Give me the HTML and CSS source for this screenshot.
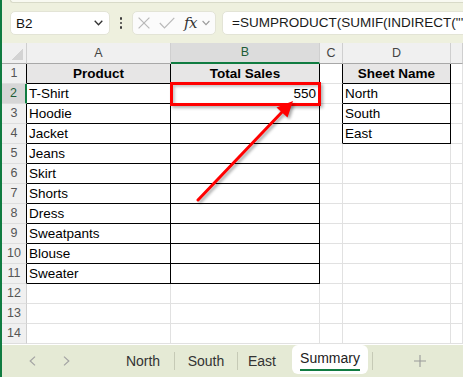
FILE: index.html
```html
<!DOCTYPE html>
<html>
<head>
<meta charset="utf-8">
<link rel="stylesheet" href="styles.css">
</head>
<body>
<div class="app">
  <div class="topbar">
    <div class="ribbon-edge"></div>
    <div class="fbar">
      <div class="namebox"><span>B2</span><svg width="9" height="6" viewBox="0 0 9 6"><polyline points="0.7,0.7 4.5,4.8 8.3,0.7" fill="none" stroke="#333" stroke-width="1.3"/></svg></div>
      <div class="dots"><i></i><i></i><i></i></div>
      <div class="fbtns">
        <svg class="ic-x" width="12" height="12" viewBox="0 0 12 12"><path d="M0.6 0.6 L11.4 11.4 M11.4 0.6 L0.6 11.4" stroke="#b9b9b9" stroke-width="1.2" fill="none"/></svg>
        <svg class="ic-ok" width="16" height="12" viewBox="0 0 16 12"><polyline points="0.8,6 5.5,11 15.3,0.8" stroke="#b9b9b9" stroke-width="1.2" fill="none"/></svg>
        <span class="fx">fx</span>
        <svg class="ic-dd" width="8" height="6" viewBox="0 0 8 6"><polyline points="0.6,1 4,4.6 7.4,1" fill="none" stroke="#9a9a9a" stroke-width="1.1"/></svg>
      </div>
      <div class="formula">=SUMPRODUCT(SUMIF(INDIRECT("'"&amp;D2:D4&amp;"'!A2:A11"),A2,INDIRECT("'"&amp;D2:D4&amp;"'!B2:B11")))</div>
    </div>
  </div>

  <div class="sheet">
    <div class="corner"></div><div class="ch">A</div><div class="ch sel">B</div><div class="ch">C</div><div class="ch">D</div><div class="ch"></div>

    <div class="rh tb">1</div><div class="t th">Product</div><div class="t th">Total Sales</div><div class="lb"></div><div class="t th">Sheet Name</div><div></div>
    <div class="rh sel">2</div><div class="t">T-Shirt</div><div class="t num">550</div><div class="lb"></div><div class="t">North</div><div></div>
    <div class="rh tb">3</div><div class="t">Hoodie</div><div class="t"></div><div class="lb"></div><div class="t">South</div><div></div>
    <div class="rh tb">4</div><div class="t">Jacket</div><div class="t"></div><div class="lb"></div><div class="t">East</div><div></div>
    <div class="rh tb">5</div><div class="t">Jeans</div><div class="t"></div><div></div><div></div><div></div>
    <div class="rh tb">6</div><div class="t">Skirt</div><div class="t"></div><div></div><div></div><div></div>
    <div class="rh tb">7</div><div class="t">Shorts</div><div class="t"></div><div></div><div></div><div></div>
    <div class="rh tb">8</div><div class="t">Dress</div><div class="t"></div><div></div><div></div><div></div>
    <div class="rh tb">9</div><div class="t">Sweatpants</div><div class="t"></div><div></div><div></div><div></div>
    <div class="rh tb">10</div><div class="t">Blouse</div><div class="t"></div><div></div><div></div><div></div>
    <div class="rh tb">11</div><div class="t">Sweater</div><div class="t"></div><div></div><div></div><div></div>
    <div class="rh">12</div><div></div><div></div><div></div><div></div><div></div>
    <div class="rh">13</div><div></div><div></div><div></div><div></div><div></div>
    <div class="rh">14</div><div></div><div></div><div></div><div></div><div></div>
  </div>

  <div class="tabbar">
    <div class="nav">
      <svg width="7" height="10" viewBox="0 0 7 10"><polyline points="6,0.6 1.2,5 6,9.4" fill="none" stroke="#a3a3a3" stroke-width="1.2"/></svg>
      <svg width="7" height="10" viewBox="0 0 7 10"><polyline points="1,0.6 5.8,5 1,9.4" fill="none" stroke="#a3a3a3" stroke-width="1.2"/></svg>
    </div>
    <div class="tab w-north">North</div>
    <div class="sep"></div>
    <div class="tab w-south">South</div>
    <div class="sep"></div>
    <div class="tab w-east">East</div>
    <div class="tab active"><span>Summary</span></div>
    <div class="sep sep-add"></div>
    <div class="add"><svg width="12" height="12" viewBox="0 0 12 12"><path d="M6 0 V12 M0 6 H12" stroke="#9a9a9a" stroke-width="1.1"/></svg></div>
  </div>

  <div class="redbox"></div>
  <svg class="arrow" width="463" height="377" viewBox="0 0 463 377">
    <line x1="198" y1="200" x2="283" y2="111" stroke="#ff0000" stroke-width="3" stroke-linecap="round"/>
    <polygon points="293,101 287.5,117.5 276.5,107.5" fill="#ff0000"/>
  </svg>
</div>
</body>
</html>
```

FILE: styles.css
```css
body {
  margin: 0;
  font-family: "Liberation Sans", Arial, sans-serif;
  background: #fff;
}

.app {
  position: relative;
  width: 463px;
  height: 377px;
  box-sizing: border-box;
  border-left: 2px solid #107c41;
  overflow: hidden;
  display: flex;
  flex-direction: column;
  background: #fff;
}

/* formula bar */
.topbar {
  height: 43px;
  flex: none;
  background: #eef0de;
  overflow: hidden;
}

.ribbon-edge {
  height: 2px;
  margin-left: 8px;
  background: #f8f9f1;
  border-bottom: 1px solid #d8dac8;
  border-left: 1px solid #d8dac8;
  border-bottom-left-radius: 5px;
}

.fbar {
  display: flex;
  align-items: center;
  height: 24px;
  margin-top: 8px;
  padding-left: 8px;
}

.namebox {
  width: 100px;
  height: 24px;
  flex: none;
  box-sizing: border-box;
  background: #fff;
  border: 1px solid #e3e4d6;
  border-radius: 5px;
  display: flex;
  align-items: center;
  justify-content: space-between;
  padding: 0 6px 0 5px;
  font-size: 13.5px;
  color: #111;
}

.dots {
  width: 22px;
  flex: none;
  display: flex;
  flex-direction: column;
  align-items: center;
  gap: 2px;
}

.dots i {
  display: block;
  width: 2.5px;
  height: 2.5px;
  border-radius: 50%;
  background: #3a3a3a;
}

.fbtns {
  width: 84px;
  height: 24px;
  flex: none;
  box-sizing: border-box;
  background: #fbfbfb;
  border: 1px solid #e3e4d6;
  border-radius: 5px;
  display: flex;
  align-items: center;
  padding-left: 5px;
}

.ic-x { margin-right: 9px; }
.ic-ok { margin-right: 9px; }

.fx {
  font-family: "DejaVu Serif", "Liberation Serif", serif;
  font-style: italic;
  font-size: 15px;
  color: #333;
  margin-right: 5px;
  line-height: 20px;
  letter-spacing: -0.5px;
}

.formula {
  margin-left: 6px;
  width: 300px;
  height: 24px;
  flex: none;
  box-sizing: border-box;
  background: #fff;
  border: 1px solid #e3e4d6;
  border-radius: 5px;
  padding-left: 9px;
  font-size: 13.5px;
  line-height: 22px;
  color: #1a1a1a;
  white-space: nowrap;
  overflow: hidden;
}

/* sheet grid */
.sheet {
  display: grid;
  grid-template-columns: 25px 144px 149px 23px 108px 1fr;
  grid-template-rows: 21px;
  grid-auto-rows: 20px;
  height: 302px;
  flex: none;
  overflow: hidden;
  font-size: 13.5px;
  color: #000;
}

.sheet > div {
  box-sizing: border-box;
  border-right: 1px solid #e1e1e1;
  border-bottom: 1px solid #e1e1e1;
  padding: 0 2px;
  line-height: 19px;
  white-space: nowrap;
  overflow: hidden;
}

.sheet > .corner {
  background: #f0f0f0 linear-gradient(to bottom right, transparent 50%, #d3d3d3 50%) no-repeat right 3px bottom 3px / 12px 12px;
  border-right-color: #cfcfcf;
  border-bottom-color: #a8a8a8;
}

.sheet > .ch {
  background: #f0f0f0;
  color: #444;
  font-size: 12.5px;
  line-height: 20px;
  text-align: center;
  border-right-color: #cfcfcf;
  border-bottom-color: #a8a8a8;
}

.sheet > .ch.sel {
  background: #dcdcdc;
  color: #1d5c36;
  border-bottom: 2px solid #107c41;
  line-height: 19px;
}

.sheet > .rh {
  background: #f0f0f0;
  color: #555;
  font-size: 12.5px;
  text-align: center;
  padding: 0;
  border-right-color: #cfcfcf;
  border-bottom-color: #dedede;
}

.sheet > .rh.tb {
  border-right-color: #000;
}

.sheet > .rh.sel {
  background: #d6d6d6;
  color: #1d5c36;
  border-right: 2px solid #107c41;
}

.sheet > .t {
  border-right-color: #000;
  border-bottom-color: #000;
}

.sheet > .lb {
  border-right-color: #000;
}

.sheet > .th {
  background: #e7e6e6;
  font-weight: bold;
  text-align: center;
}

.sheet > .num {
  text-align: right;
  padding-right: 3px;
}

/* sheet tabs */
.tabbar {
  height: 32px;
  flex: none;
  background: #e5ead5;
  display: flex;
  align-items: center;
  font-size: 14px;
  color: #333;
}

.nav {
  width: 110px;
  flex: none;
  display: flex;
  align-items: center;
  gap: 27px;
  padding-left: 27px;
  box-sizing: border-box;
}

.tab {
  flex: none;
  text-align: center;
  line-height: 32px;
}

.w-north { width: 62px; }
.w-south { width: 62px; }
.w-east { width: 48px; }

.sep {
  width: 1px;
  height: 18px;
  flex: none;
  background: #c6cab6;
}

.tab.active {
  align-self: flex-start;
  width: 76px;
  height: 29px;
  margin-left: 6px;
  background: #fff;
  border-radius: 6px;
  display: flex;
  align-items: center;
  justify-content: center;
  line-height: 16px;
  color: #222;
}

.tab.active span {
  padding-top: 1px;
  padding-bottom: 3px;
  border-bottom: 2px solid #107c41;
}

.sep-add {
  margin-left: 4px;
}

.add {
  flex: 1;
  display: flex;
  justify-content: center;
  align-items: center;
  padding-left: 4px;
}

/* annotations lying over the sheet */
.redbox {
  position: absolute;
  left: 168px;
  top: 82px;
  width: 151px;
  height: 24px;
  box-sizing: border-box;
  border: 3px solid #ff0000;
  box-shadow: 2px 2px 3px rgba(0, 0, 0, 0.3), inset 2px 2px 3px rgba(0, 0, 0, 0.22);
}

.arrow {
  position: absolute;
  left: -2px;
  top: 0;
  pointer-events: none;
  filter: drop-shadow(2px 2px 1.5px rgba(0, 0, 0, 0.35));
}
```
